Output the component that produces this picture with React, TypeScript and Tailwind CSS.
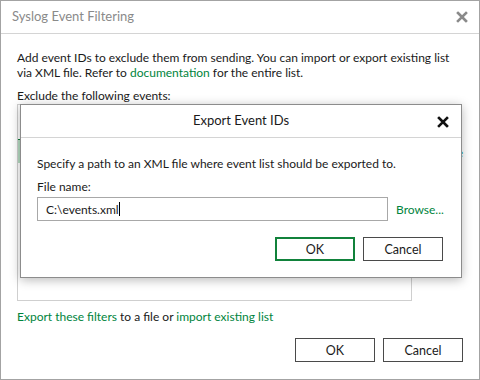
import React from "react";

const green = "text-[#00843d]";

function CloseIcon({ color, size }: { color: string; size: number }) {
  return (
    <svg width={size} height={size} viewBox="0 0 12 12">
      <path d="M2 2 L10 10 M10 2 L2 10" stroke={color} strokeWidth="2.6" strokeLinecap="square" />
    </svg>
  );
}

function Button({ label, primary }: { label: string; primary?: boolean }) {
  return (
    <button
      className={`w-[80px] h-[24px] bg-white text-[12.5px] text-[#1a1a1a] ${
        primary ? "border-2 border-[#11823b]" : "border border-[#4a4a4a]"
      }`}
    >
      {label}
    </button>
  );
}

export default function App() {
  return (
    <div
      className="relative w-[480px] h-[380px] bg-white border border-[#a3a3a3] flex flex-col text-[12px] text-[#1a1a1a] overflow-hidden"
      style={{ fontFamily: 'Lato, "Noto Sans", sans-serif' }}
    >
      {/* Title bar */}
      <div className="h-[33px] shrink-0 border-b border-[#d4d4d4] flex items-center justify-between pl-[11px] pr-[11px]">
        <span className="text-[#8a8a8a] text-[13px]">Syslog Event Filtering</span>
        <CloseIcon color="#8a8a8a" size={12} />
      </div>

      {/* Body */}
      <div className="flex flex-col px-[16px] pt-[16px] leading-[15px]">
        <p className="whitespace-nowrap">
          Add event IDs to exclude them from sending. You can import or export existing list
          <br />
          via XML file. Refer to <span className={green}>documentation</span> for the entire list.
        </p>
        <p className="mt-[8px]">Exclude the following events:</p>

        <div className="flex mt-[1px]">
          <div className="w-[395px] h-[197px] border border-[#cfcfcf] flex flex-col">
            <div className="h-[34px]" />
            <div className="h-[24px] border-t border-[#0c7a36] bg-[#b5dcc2]" />
          </div>
          <div className="flex-1 flex flex-col items-end pt-[41px]">
            <span className={green}>Remove</span>
          </div>
        </div>

        <p className="mt-[8px]">
          <span className={green}>Export these filters</span> to a file or{" "}
          <span className={green}>import existing list</span>
        </p>

        <div className="flex justify-end gap-[8px] mt-[14px]">
          <Button label="OK" />
          <Button label="Cancel" />
        </div>
      </div>

      {/* Modal */}
      <div className="absolute left-[19px] top-[103px] w-[442px] h-[174px] bg-white border border-[#8c8c8c] shadow-[0_2px_10px_rgba(0,0,0,0.28)] flex flex-col">
        <div className="h-[33px] shrink-0 border-b border-[#d4d4d4] relative flex items-center justify-center">
          <span className="text-[13px] text-[#1a1a1a]">Export Event IDs</span>
          <div className="absolute right-[12px] top-[11px]">
            <CloseIcon color="#111" size={12} />
          </div>
        </div>
        <div className="flex flex-col px-[16px] pt-[18px] leading-[15px]">
          <p>Specify a path to an XML file where event list should be exported to.</p>
          <p className="mt-[8px]">File name:</p>
          <div className="flex items-center mt-[3px]">
            <div className="w-[351px] h-[24px] border border-[#a8a8a8] flex items-center px-[8px]">
              <span>C:\events.xml</span>
              <span className="w-[1px] h-[14px] bg-black" />
            </div>
            <span className={`ml-[8px] ${green}`}>Browse...</span>
          </div>
          <div className="flex justify-end gap-[8px] mt-[16px] pr-[2px]">
            <Button label="OK" primary />
            <Button label="Cancel" />
          </div>
        </div>
      </div>
    </div>
  );
}
